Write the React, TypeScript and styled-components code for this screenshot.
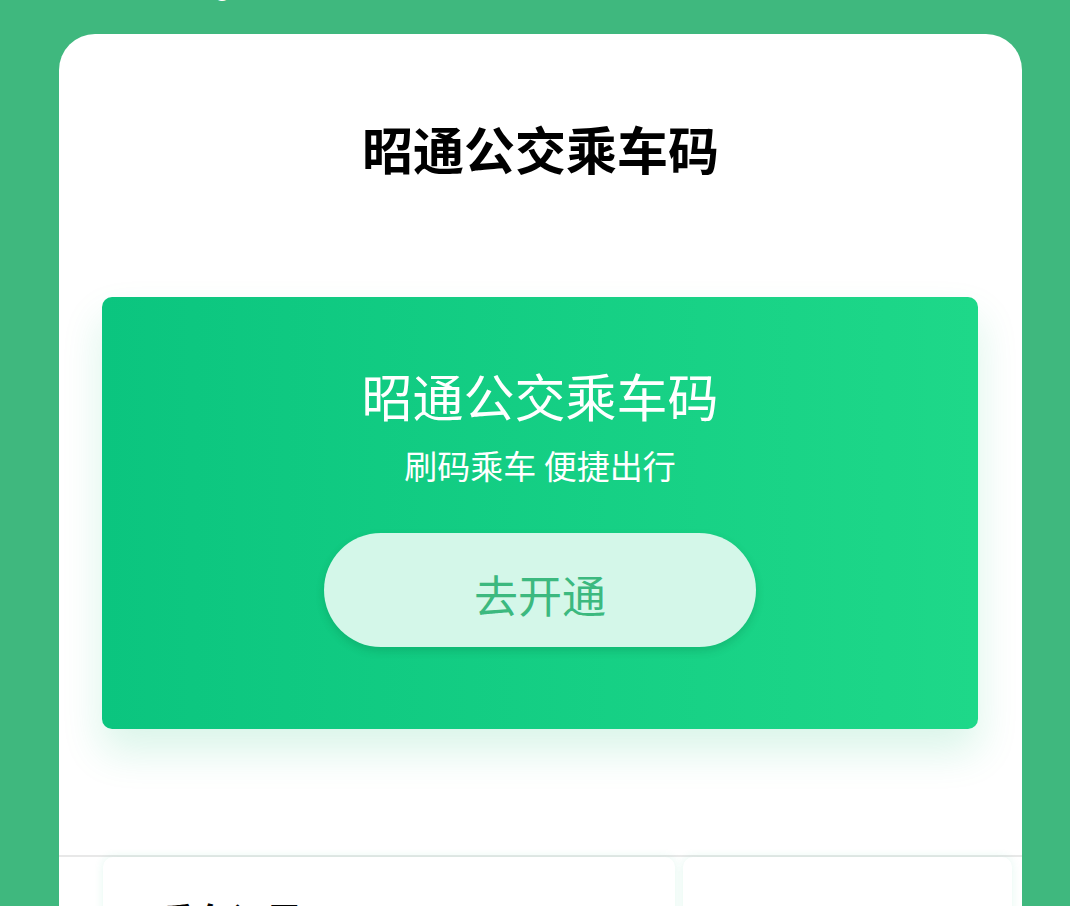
import React from "react";
import styled, { createGlobalStyle } from "styled-components";

const Global = createGlobalStyle`
  html, body {
    margin: 0;
    padding: 0;
    background: #3fb87e;
    font-family: "Noto Sans CJK SC", "Noto Sans", sans-serif;
    overflow: hidden;
  }
`;

const Page = styled.div`
  width: 1070px;
  height: 906px;
  overflow: hidden;
  background: #3fb87e;
`;

const TopBar = styled.div`
  height: 34px;
  overflow: hidden;
  padding-left: 214px;
`;

const TopText = styled.div`
  margin-top: -30px;
  color: #ffffff;
  font-family: "Roboto", sans-serif;
  font-size: 30px;
  line-height: 30px;
`;

const Sheet = styled.div`
  margin: 0 48px 0 59px;
  background: #ffffff;
  border-radius: 36px 36px 0 0;
  padding-top: 79px;
  display: flex;
  flex-direction: column;
  align-items: stretch;
`;

const Title = styled.h1`
  margin: 0;
  text-align: center;
  font-size: 51px;
  line-height: 70px;
  font-weight: 700;
  color: #000000;
`;

const Banner = styled.div`
  margin: 114px 44px 0 43px;
  height: 432px;
  box-sizing: border-box;
  padding-top: 63px;
  border-radius: 10px;
  background: linear-gradient(90deg, #0bc57f 0%, #1ed889 100%);
  box-shadow: 0 22px 40px rgba(20, 190, 120, 0.16);
  display: flex;
  flex-direction: column;
  align-items: center;
  color: #ffffff;
`;

const BannerTitle = styled.div`
  font-size: 51px;
  line-height: 70px;
  font-weight: 400;
`;

const BannerSub = styled.div`
  margin-top: 13px;
  font-size: 33px;
  line-height: 44px;
`;

const OpenButton = styled.button`
  margin-top: 46px;
  width: 432px;
  height: 114px;
  border: none;
  border-radius: 57px;
  background: #d4f7e9;
  color: #3cb97f;
  font-family: inherit;
  font-size: 44px;
  padding: 8px 0 0;
  box-shadow: 0 4px 8px rgba(0, 80, 40, 0.18);
  cursor: pointer;
`;

const Divider = styled.div`
  margin-top: 126px;
  height: 2px;
  background: #e8e8e8;
`;

const CardRow = styled.div`
  display: flex;
  gap: 8px;
  padding: 0 10px 0 44px;
  height: 60px;
`;

const InfoCard = styled.div<{ $w: number }>`
  width: ${(p) => p.$w}px;
  height: 200px;
  background: #ffffff;
  border-radius: 10px;
  box-shadow: 0 0 10px rgba(30, 200, 140, 0.12);
  padding: 37px 0 0 56px;
  box-sizing: border-box;
`;

const CardTitle = styled.div`
  font-size: 36px;
  line-height: 50px;
  font-weight: 700;
  color: #000;
`;

export default function App() {
  return (
    <Page>
      <Global />
      <TopBar>
        <TopText>g</TopText>
      </TopBar>
      <Sheet>
        <Title>昭通公交乘车码</Title>
        <Banner>
          <BannerTitle>昭通公交乘车码</BannerTitle>
          <BannerSub>刷码乘车 便捷出行</BannerSub>
          <OpenButton>去开通</OpenButton>
        </Banner>
        <Divider />
        <CardRow>
          <InfoCard $w={572}>
            <CardTitle>乘车记录</CardTitle>
          </InfoCard>
          <InfoCard $w={329} />
        </CardRow>
      </Sheet>
    </Page>
  );
}
